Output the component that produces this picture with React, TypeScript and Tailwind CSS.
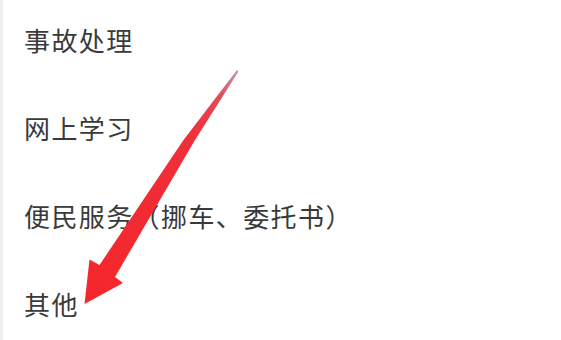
import React from "react";

const items = ["事故处理", "网上学习", "便民服务（挪车、委托书）", "其他"];

export default function App() {
  return (
    <div className="relative w-[561px] h-[340px] overflow-hidden bg-white">
      <div className="absolute left-0 top-0 h-full w-[3px] bg-[#efefef]" />
      <div
        className="flex flex-col gap-[60px] pt-[26px] pl-[24px] text-[26px] leading-[28px] tracking-[1.4px] text-[#3a3a3a]"
        style={{ fontFamily: '"Noto Sans CJK SC", "Noto Sans", sans-serif' }}
      >
        {items.map((t) => (
          <div key={t} className="whitespace-nowrap">
            {t}
          </div>
        ))}
      </div>
      <svg
        className="absolute left-0 top-0 pointer-events-none"
        width="561"
        height="340"
        viewBox="0 0 561 340"
      >
        <defs>
          <linearGradient id="ag" x1="238" y1="70" x2="85" y2="303" gradientUnits="userSpaceOnUse">
            <stop offset="0" stopColor="#b7a0b0" />
            <stop offset="0.12" stopColor="#e84656" />
            <stop offset="0.3" stopColor="#f02f3a" />
            <stop offset="1" stopColor="#f5262a" />
          </linearGradient>
        </defs>
        <polygon
          points="237,70 183.5,140 99.5,265 89.5,259.5 84.5,304 123,283 115,277 195,140 238.5,71.5"
          fill="url(#ag)"
        />
      </svg>
    </div>
  );
}
